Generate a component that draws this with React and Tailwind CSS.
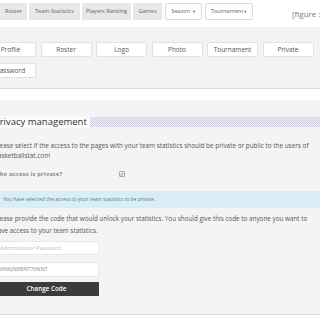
import React from "react";

const Tab = ({ w, children, light }) => (
  <div
    className={`${w} h-[17px] shrink-0 flex items-center justify-center text-[5.6px] text-[#666] ${
      light ? "bg-white border border-[#dadada] rounded-[2px]" : "bg-[#e8e8e8]"
    }`}
  >
    {children}
  </div>
);

const Btn = ({ children }) => (
  <div className="w-[51px] h-[15px] shrink-0 flex items-center justify-center bg-white border border-[#e2e2e2] rounded-[2px] text-[6.5px] text-[#555]">
    {children}
  </div>
);

export default function App() {
  return (
    <div
      className="w-[320px] h-[320px] overflow-hidden bg-white relative"
      style={{ fontFamily: '"Open Sans", "Liberation Sans", sans-serif' }}
    >
      {/* nav */}
      <div className="h-[27px] flex items-start pt-[3px]">
        <Tab w="w-[27px]">Roster</Tab>
        <div className="w-[2px] shrink-0" />
        <Tab w="w-[51px]">Team Statistics</Tab>
        <div className="w-[2px] shrink-0" />
        <Tab w="w-[49px]">Players Ranking</Tab>
        <div className="w-[2px] shrink-0" />
        <Tab w="w-[29px]">Games</Tab>
        <div className="w-[3px] shrink-0" />
        <Tab w="w-[37px]" light>
          Seazon <span className="ml-[2px] text-[4px]">▼</span>
        </Tab>
        <div className="w-[3px] shrink-0" />
        <Tab w="w-[48px]" light>
          Tournament<span className="text-[4px]">▼</span>
        </Tab>
        <div className="ml-[39px] shrink-0 whitespace-nowrap text-[8px] leading-[10px] text-[#777] mt-[6px]">
          [figure :
        </div>
      </div>

      {/* gray band with buttons */}
      <div className="h-[62px] bg-[#f3f3f3] border-b border-[#dcdcdc] pt-[15px]">
        <div className="ml-[-15px] flex gap-[4.5px]">
          <Btn>Profile</Btn>
          <Btn>Roster</Btn>
          <Btn>Logo</Btn>
          <Btn>Photo</Btn>
          <Btn>Tournament</Btn>
          <Btn>Private</Btn>
        </div>
        <div className="ml-[-15px] mt-[6px] flex">
          <Btn>Password</Btn>
        </div>
      </div>

      <div className="h-[11px]" />

      {/* privacy panel */}
      <div className="h-[215px] bg-[#f4f4f4] border-b border-[#dadada]">
        <div className="ml-[-6px] w-[326px]">
          <div className="pt-[16px] flex items-center h-[28px]">
            <div className="h-[12px] pr-[3px] bg-[#fbfbfb] text-[9.5px] leading-[12px] text-[#333] whitespace-nowrap">
              Privacy management
            </div>
            <div className="flex-1 h-[10px] bg-[conic-gradient(#d0c6e4_25%,transparent_0_50%,#d0c6e4_0_75%,transparent_0)] bg-[length:2px_2px]" />
          </div>

          <p className="mt-[13px] text-[6.4px] leading-[9.5px] text-[#555] pr-[8px]">
            Please select if the access to the pages with your team statistics should be private or public to the users of basketballstat.com
          </p>

          <div className="mt-[10px] flex items-center h-[8px]">
            <div className="w-[123px] ml-[2px] text-[5.8px] font-bold tracking-[0.2px] text-[#8a8a8a] whitespace-nowrap">
              The access is private?
            </div>
            <div className="w-[6px] h-[6px] border border-[#aaa] bg-[#eee] rounded-[1px] flex items-center justify-center text-[5px] leading-none text-[#445]">
              ✓
            </div>
          </div>

          <div className="mt-[13px] h-[17px] bg-[#d9edf7] flex items-center pl-[9px] text-[5px] text-[#4a7d9c] whitespace-nowrap">
            You have selected the access to your team statistics to be private.
          </div>

          <p className="mt-[5px] text-[6.35px] leading-[11.5px] font-medium text-[#555] pr-[2px]">
            Please provide the code that would unlock your statistics. You should give this code to anyone you want to have access to your team statistics.
          </p>

          <div className="mt-[5px] w-[105px] h-[14px] bg-white border border-[#e8e8e8] flex items-center pl-[5px] text-[5.4px] text-[#bdbdbd]">
            Administrator Password
          </div>
          <div className="mt-[7px] w-[105px] h-[15px] bg-white border border-[#e8e8e8] flex items-center pl-[4px] text-[5.4px] text-[#8a8a8a]">
            JKNKJN8BNT76NN7
          </div>
          <div className="mt-[5px] w-[105px] h-[14px] bg-[#3b3b3b] flex items-center justify-center text-[6.3px] font-semibold text-white">
            Change Code
          </div>
        </div>
      </div>
    </div>
  );
}
